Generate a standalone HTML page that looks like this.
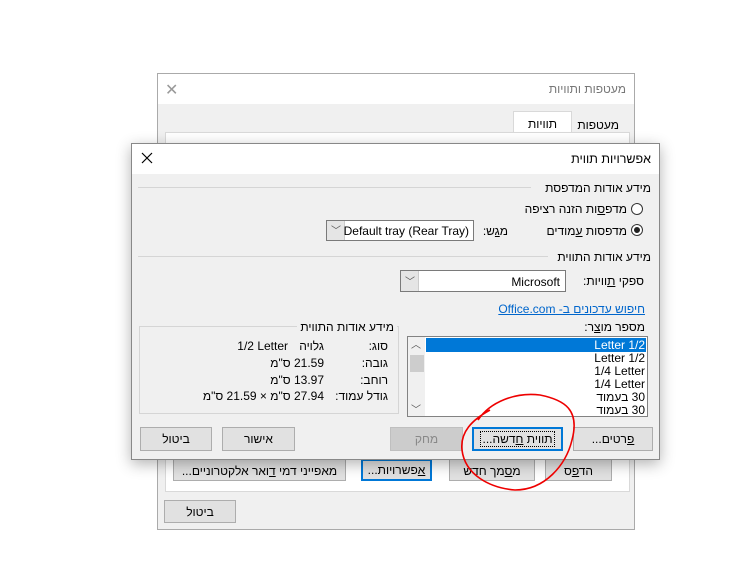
<!DOCTYPE html><html><head><meta charset="utf-8"><style>
body{margin:0;width:739px;height:565px;background:#fff;position:relative;overflow:hidden;font-family:"Liberation Sans","Noto Sans CJK JP",sans-serif;font-size:12px;color:#000}
.a{position:absolute}
.t{position:absolute;direction:rtl;white-space:nowrap;line-height:14px}
.l{position:absolute;direction:ltr;white-space:nowrap;line-height:14px}
.btn{position:absolute;background:#e1e1e1;border:1px solid #adadad;box-sizing:border-box;text-align:center;line-height:22px;direction:rtl;font-size:12px}
.combo{position:absolute;background:#fff;border:1px solid #7a7a7a;box-sizing:border-box}
.combo .dd{position:absolute;left:0;top:0;bottom:0;width:17px;background:#e5e5e5;border-right:1px solid #ccc}
u{text-decoration:underline}
</style></head><body>
<div class="a" style="left:157px;top:73px;width:478px;height:457px;background:#f0f0f0;border:1px solid #aaa;box-sizing:border-box"></div>
<div class="a" style="left:158px;top:74px;width:476px;height:30px;background:#fff"></div>
<div class="t" style="right:113px;top:82px;color:#777;font-size:12px">מעטפות ותוויות</div>
<div class="a" style="left:165px;top:80px;color:#999;font-size:16px">✕</div>
<div class="a" style="left:513px;top:111px;width:57px;height:22px;background:#fff;border:1px solid #d9d9d9;border-bottom:none"></div>
<div class="t" style="right:182px;top:117px">תוויות</div>
<div class="t" style="right:120px;top:118px">מעטפות</div>
<div class="a" style="left:165px;top:132px;width:463px;height:358px;background:#fff;border:1px solid #d9d9d9"></div>
<div class="btn" style="left:173px;top:459px;width:173px;height:22px">מאפייני דמי <u>ד</u>ואר אלקטרוניים...</div>
<div class="btn" style="left:361px;top:459px;width:71px;height:22px;border:2px solid #0078d7;line-height:18px"><u>א</u>פשרויות...</div>
<div class="btn" style="left:449px;top:459px;width:86px;height:22px">מ<u>ס</u>מך חדש</div>
<div class="btn" style="left:545px;top:459px;width:67px;height:22px">הד<u>פ</u>ס</div>
<div class="btn" style="left:164px;top:500px;width:72px;height:23px">ביטול</div>
<div class="a" style="left:131px;top:143px;width:529px;height:317px;background:#f0f0f0;border:1px solid #888;box-sizing:border-box;box-shadow:0 4px 14px rgba(0,0,0,.3)"></div>
<div class="a" style="left:132px;top:144px;width:527px;height:30px;background:#fff"></div>
<div class="t" style="right:88px;top:152px;font-size:12.5px">אפשרויות תווית</div>
<svg class="a" style="left:141px;top:152px" width="12" height="12"><path d="M1 1L11 11M11 1L1 11" stroke="#000" stroke-width="1.2"/></svg>
<div class="t" style="right:88px;top:181px">מידע אודות המדפסת</div>
<div class="a" style="left:138px;top:187px;width:393px;height:1px;background:#d5d5d5"></div>
<svg class="a" style="left:630px;top:202px" width="14" height="35"><circle cx="7" cy="7" r="5.5" fill="#fff" stroke="#333"/><circle cx="7" cy="28" r="5.5" fill="#fff" stroke="#333"/><circle cx="7" cy="28" r="3" fill="#222"/></svg>
<div class="t" style="right:112px;top:202px">מדפ<u>ס</u>ות הזנה רציפה</div>
<div class="t" style="right:112px;top:224px">מדפסות <u>ע</u>מודים</div>
<div class="t" style="right:231px;top:224px">מ<u>ג</u>ש:</div>
<div class="combo" style="left:326px;top:220px;width:148px;height:21px"><div class="dd"></div><div class="a" style="left:4px;top:1px;color:#555;font-size:10px">﹀</div><div class="l" style="right:4px;top:3px">Default tray (Rear Tray)</div></div>
<div class="t" style="right:88px;top:250px">מידע אודות התווית</div>
<div class="a" style="left:138px;top:256px;width:410px;height:1px;background:#d5d5d5"></div>
<div class="t" style="right:95px;top:274px">ספקי <u>ת</u>וויות:</div>
<div class="combo" style="left:400px;top:270px;width:166px;height:22px"><div class="dd"></div><div class="a" style="left:4px;top:2px;color:#555;font-size:10px">﹀</div><div class="l" style="right:5px;top:4px">Microsoft</div></div>
<div class="t" style="right:94px;top:302px;color:#0066cc;text-decoration:underline">חיפוש עדכונים ב- Office.com</div>
<div class="t" style="right:94px;top:320px">מספר מו<u>צ</u>ר:</div>
<div class="a" style="left:407px;top:336px;width:241px;height:81px;background:#fff;border:1px solid #828282;box-sizing:border-box"></div>
<div class="a" style="left:408px;top:337px;width:17px;height:79px;background:#f0f0f0"></div>
<div class="a" style="left:410px;top:355px;width:14px;height:17px;background:#cdcdcd"></div>
<div class="a" style="left:411px;top:336px;font-size:10px;color:#555">︿</div>
<div class="a" style="left:411px;top:401px;font-size:10px;color:#555">﹀</div>
<div class="a" style="left:426px;top:338px;width:220px;height:14px;background:#0078d7"></div>
<div class="l" style="right:94px;top:338px;color:#fff">Letter 1/2</div>
<div class="l" style="right:94px;top:351px">Letter 1/2</div>
<div class="l" style="right:94px;top:364px">1/4 Letter</div>
<div class="l" style="right:94px;top:377px">1/4 Letter</div>
<div class="t" style="right:94px;top:390px">30 בעמוד</div>
<div class="t" style="right:94px;top:403px">30 בעמוד</div>
<div class="a" style="left:139px;top:326px;width:260px;height:88px;border:1px solid #d5d5d5;box-sizing:border-box"></div>
<div class="t" style="right:342px;top:320px;background:#f0f0f0;padding:0 3px">מידע אודות התווית</div>
<div class="t" style="right:351px;top:339px">סוג:</div><div class="t" style="right:415px;top:339px">גלויה</div><div class="l" style="right:451px;top:339px">1/2 Letter</div>
<div class="t" style="right:351px;top:356px">גובה:</div><div class="t" style="right:415px;top:356px">21.59 ס"מ</div>
<div class="t" style="right:351px;top:373px">רוחב:</div><div class="t" style="right:415px;top:373px">13.97 ס"מ</div>
<div class="t" style="right:351px;top:389px">גודל עמוד:</div><div class="t" style="right:415px;top:389px">27.94 ס"מ × 21.59 ס"מ</div>
<div class="btn" style="left:140px;top:427px;width:72px;height:24px">ביטול</div>
<div class="btn" style="left:222px;top:427px;width:73px;height:24px">אישור</div>
<div class="btn" style="left:390px;top:427px;width:73px;height:24px;background:#ccc;border-color:#bfbfbf;color:#888">מחק</div>
<div class="btn" style="left:472px;top:427px;width:91px;height:24px;border:2px solid #0078d7;line-height:20px"><span style="outline:1px dotted #000;padding:0 2px">תווית <u>ח</u>דשה...</span></div>
<div class="btn" style="left:573px;top:427px;width:80px;height:24px"><u>פ</u>רטים...</div>
<svg class="a" style="left:0;top:0" width="739" height="565"><path d="M478 420 C490 402 515 392 540 395 C565 400 580 410 572 440 C566 465 545 490 515 490 C490 488 465 475 462 450 C460 432 472 420 490 410" fill="none" stroke="#e00" stroke-width="1.6"/></svg>
</body></html>
